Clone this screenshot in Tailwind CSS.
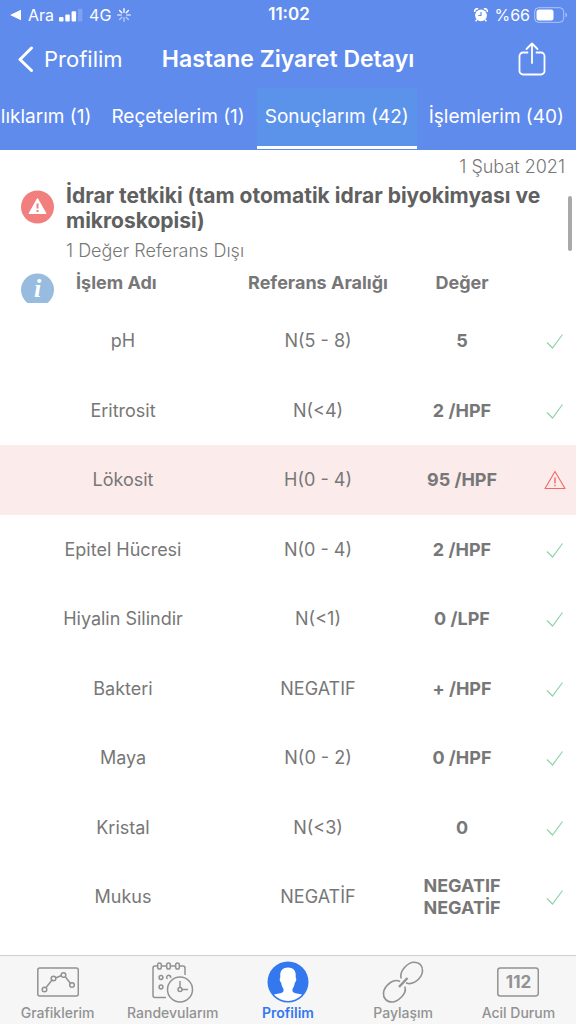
<!DOCTYPE html>
<html lang="tr">
<head>
  <meta charset="UTF-8" />
  <title>Hastane Ziyaret Detayı</title>
  <meta name="viewport" content="width=device-width, initial-scale=1.0" />
  <script src="https://cdn.jsdelivr.net/npm/@tailwindcss/browser@4"></script>
</head>
<body class="relative flex min-h-screen flex-col overflow-x-hidden bg-white font-['Inter','Liberation_Sans',sans-serif] text-[#777777]">

  <header class="bg-[#5f8bed] text-white">

    <!-- Durum çubuğu -->
    <div class="grid h-[30px] grid-cols-3 items-center pr-2 pl-[10px] text-base">
      <div class="flex items-center">
        <svg class="h-3 w-3" viewBox="0 0 12 12" fill="currentColor"><path d="M0 6 11 .8v10.400z" /></svg>
        <span class="ml-[6px]">Ara</span>
        <svg class="ml-[5px] h-[14px] w-6" viewBox="0 0 24 14" fill="currentColor">
          <rect x="0" y="9" width="4.500" height="4.500" rx="1" />
          <rect x="6.300" y="6.500" width="4.500" height="7" rx="1" />
          <rect x="12.600" y="3.300" width="4.500" height="10.200" rx="1" />
          <rect x="18.900" y=".8" width="4.500" height="12.700" rx="1" opacity=".2" />
        </svg>
        <span class="ml-[6px]">4G</span>
        <svg class="ml-[6px] h-[14px] w-[14px]" viewBox="0 0 14 14" stroke="currentColor" stroke-width="1.400" stroke-linecap="round">
          <path d="M7 .7v3.500M11.400 2.600 9.200 4.800M2.600 2.600l2.200 2.200" />
          <path d="M13.300 7H9.800M4.200 7H.7" opacity=".7" />
          <path d="M11.400 11.400 9.200 9.200M7 13.300V9.800M2.600 11.400l2.200-2.200" opacity=".55" />
        </svg>
      </div>
      <span class="text-center text-[17px] font-semibold">11:02</span>
      <div class="flex items-center justify-end">
        <svg class="h-[14px] w-[14px]" viewBox="0 0 14 14">
          <path d="M.6 4A3 3 0 0 1 4.200.7M13.400 4A3 3 0 0 0 9.800.7M2.800 11.800 1.600 13.200M11.200 11.800l1.200 1.400" fill="none" stroke="#fff" stroke-width="1.600" />
          <circle cx="7" cy="7.300" r="5.900" fill="#fff" />
          <path d="M7 4v3.500H4.300" fill="none" stroke="#5f8bed" stroke-width="1.200" />
        </svg>
        <span class="ml-[6px]">%66</span>
        <svg class="ml-1 h-4 w-[34px]" viewBox="0 0 34 16" fill="none">
          <rect x=".7" y=".7" width="29" height="14.600" rx="4" stroke="#fff" stroke-opacity=".5" />
          <rect x="2.500" y="2.500" width="17" height="11" rx="2.500" fill="#fff" />
          <path d="M31.500 5.500c2 1 2 4 0 5z" fill="#fff" fill-opacity=".5" />
        </svg>
      </div>
    </div>

    <div class="grid h-[58px] grid-cols-[1fr_auto_1fr] items-center px-[18px]">
      <button type="button" class="flex items-center gap-[10px] text-[22px]">
        <svg class="h-7 w-4" viewBox="0 0 16 28" fill="none" stroke="currentColor" stroke-width="3" stroke-linecap="round" stroke-linejoin="round"><path d="M13.500 3 2 14.500 13.500 25.500" /></svg>
        Profilim
      </button>
      <h1 class="text-[23px] font-semibold">Hastane Ziyaret Detayı</h1>
      <div class="flex justify-end pr-3">
        <button type="button" aria-label="Paylaş">
          <svg class="h-[34px] w-7" viewBox="0 0 28 34" fill="none" stroke="currentColor" stroke-width="1.800" stroke-linecap="round" stroke-linejoin="round">
            <path d="M9.500 10.500H5A3.500 3.500 0 0 0 1.500 14v15A3.500 3.500 0 0 0 5 32.500h18a3.500 3.500 0 0 0 3.500-3.500V14a3.500 3.500 0 0 0-3.500-3.500h-4.500" />
            <path d="M14 21V1.500M8.500 7 14 1.500 19.500 7" />
          </svg>
        </button>
      </div>
    </div>

    <nav class="flex h-[62px] justify-end gap-1 overflow-hidden pr-1 text-[19px] whitespace-nowrap">
      <a href="#" class="flex items-center px-2 pb-1">Hastalıklarım (1)</a>
      <a href="#" class="flex items-center px-2 pb-1">Reçetelerim (1)</a>
      <a href="#" class="mb-px flex items-center border-b-3 border-white bg-[#5c93ea] px-2">Sonuçlarım (42)</a>
      <a href="#" class="flex items-center px-2 pb-1">İşlemlerim (40)</a>
    </nav>
  </header>

  <main class="flex-1">
    <p class="px-[11px] pt-[5px] text-right text-lg leading-6 font-light">1 Şubat 2021</p>

    <section class="flex gap-3 pt-1 pr-5 pl-5">
      <svg class="mt-[7px] h-[34px] w-[34px] shrink-0" viewBox="0 0 34 34">
        <circle cx="17.500" cy="17" r="16.500" fill="#f07f7e" />
        <path d="M17.500 8.500 26 23.500H9z" fill="#fff" stroke="#fff" stroke-width="1" stroke-linejoin="round" />
        <path d="M17.500 13.500v5M17.500 20v2" stroke="#f07f7e" stroke-width="2" />
      </svg>
      <div>
        <h2 class="text-[21px] leading-[25px] font-bold text-[#606060]">İdrar tetkiki (tam otomatik idrar biyokimyası ve mikroskopisi)</h2>
        <p class="pt-[6px] text-lg leading-6 font-light">1 Değer Referans Dışı</p>
      </div>
    </section>

    <table class="w-full table-fixed text-center text-lg leading-[22px]">
      <thead>
        <tr class="h-[43px] align-top font-semibold">
          <th class="pt-[9px] pl-5">
            <div class="flex gap-[22px]">
              <svg class="h-[31px] w-[34px]" viewBox="0 0 34 31">
                <path d="M7.500 31A16.500 16.500 0 1 1 27.500 31z" fill="#97bce0" />
                <text x="17.500" y="25" text-anchor="middle" fill="#fff" font-family="Liberation Serif, serif" font-size="26" font-weight="700" font-style="italic">i</text>
              </svg>
              <span>İşlem Adı</span>
            </div>
          </th>
          <th class="w-36 pt-[9px] whitespace-nowrap">Referans Aralığı</th>
          <th class="w-36 pt-[9px]">Değer</th>
          <th class="w-[42px]"></th>
        </tr>
      </thead>
      <tbody id="sonuclar"></tbody>
    </table>
  </main>

  <!-- Kaydırma çubuğu -->
  <div class="absolute top-[196px] right-1 h-[55px] w-1 rounded-full bg-[#a9a9a9]"></div>

  <nav class="sticky bottom-0 grid h-[69px] grid-cols-5 border-t border-[#cfcfcf] bg-[#f6f6f6] text-sm leading-4 font-medium text-[#929292]">
    <a href="#" class="flex flex-col items-center gap-[2px] pt-[5px]">
      <svg class="h-[42px] w-[42px]" viewBox="0 0 42 42" fill="none" stroke="currentColor" stroke-width="1.500">
        <rect x=".8" y="7" width="40.500" height="28" rx="2" />
        <path d="m9 26.500 6.500-8M18.500 17l6-2.500M28.500 16l5 6.500" />
        <circle cx="7.500" cy="28.500" r="2.300" /><circle cx="16.500" cy="17.500" r="2.300" /><circle cx="26.500" cy="14" r="2.300" /><circle cx="35" cy="24" r="2.300" />
      </svg>
      Grafiklerim
    </a>
    <a href="#" class="flex flex-col items-center gap-[2px] pt-[5px]">
      <svg class="h-[42px] w-[42px]" viewBox="0 0 42 42" fill="none" stroke="currentColor" stroke-width="1.500">
        <path d="M14 36.500H3q-2 0-2-2V7q0-2 2-2h2.500M9.500 5h5M18.500 5h5M27.500 5h3.500q2 0 2 2v7" />
        <rect x="5.700" y="2" width="3.600" height="6" rx="1.800" /><rect x="14.700" y="2" width="3.600" height="6" rx="1.800" /><rect x="23.700" y="2" width="3.600" height="6" rx="1.800" />
        <circle cx="9" cy="16.500" r="1.900" /><path d="M15.500 18a2 2 0 1 1 3-1" /><circle cx="9" cy="26" r="1.900" />
        <circle cx="28" cy="28.500" r="12.500" />
        <circle cx="28" cy="28.500" r="2" />
        <path d="M28 26.500V20M30 28.500h6" />
      </svg>
      Randevularım
    </a>
    <a href="#" class="flex flex-col items-center gap-[2px] pt-[5px] font-semibold text-[#3478f0]">
      <svg class="h-[42px] w-[42px]" viewBox="0 0 42 42">
        <circle cx="21" cy="21" r="20.500" fill="currentColor" />
        <path d="M21 6.500c5.500 0 8.200 3.500 7.700 9l.1 1.500c1 .3.300 4-.9 4.500-.6 3.500-1.400 5-2.400 6.500-.3 3.500.5 4 9.700 5.500A19 19 0 0 1 6.800 33.500c9.200-1.500 10-2 9.700-5.500-1-1.500-1.800-3-2.400-6.500-1.200-.5-1.900-4.200-.9-4.500l.1-1.500c-.5-5.500 2.200-9 7.700-9z" fill="#fff" />
      </svg>
      Profilim
    </a>
    <a href="#" class="flex flex-col items-center gap-[2px] pt-[5px]">
      <svg class="h-[42px] w-[42px]" viewBox="0 0 42 42" fill="none" stroke="currentColor" stroke-width="1.600">
        <path d="M19.200 17.500C17.500 13 20 9.500 22.500 6.500 25.500 3 28 1.200 32 1.200c5.500 0 9 4 8.500 9-.3 4-3.500 8-7 10.500-3 2-6.500 2.500-9.500 1" />
        <path d="M22.800 25.500c1.700 4.500-.8 7.500-3.300 10.500-3 3-5.500 5-9.500 5-5.500 0-9-4-8.500-9 .3-4 3.500-8 7-10.500 3-2 6.500-2.500 9.500-1" />
        <path d="m17 26 8.500-9" stroke-width="2.400" />
      </svg>
      Paylaşım
    </a>
    <a href="#" class="flex flex-col items-center gap-[2px] pt-[5px]">
      <svg class="h-[42px] w-[42px]" viewBox="0 0 42 42">
        <rect x=".8" y="7" width="40.500" height="28" rx="2.500" fill="none" stroke="currentColor" stroke-width="1.500" />
        <text x="21.500" y="27" text-anchor="middle" fill="currentColor" font-size="17" font-weight="700">112</text>
      </svg>
      Acil Durum
    </a>
  </nav>

  <script>
    const sonuclar = [
      { ad: 'pH', referans: 'N(5 - 8)', deger: '5' },
      { ad: 'Eritrosit', referans: 'N(<4)', deger: '2 /HPF' },
      { ad: 'Lökosit', referans: 'H(0 - 4)', deger: '95 /HPF', uyari: true },
      { ad: 'Epitel Hücresi', referans: 'N(0 - 4)', deger: '2 /HPF' },
      { ad: 'Hiyalin Silindir', referans: 'N(<1)', deger: '0 /LPF' },
      { ad: 'Bakteri', referans: 'NEGATIF', deger: '+ /HPF' },
      { ad: 'Maya', referans: 'N(0 - 2)', deger: '0 /HPF' },
      { ad: 'Kristal', referans: 'N(<3)', deger: '0' },
      { ad: 'Mukus', referans: 'NEGATİF', deger: 'NEGATIF NEGATİF' }
    ];

    const normalIkon = `
      <svg class="mx-auto h-5 w-5" viewBox="0 0 20 20" fill="none" stroke="#8fd3a6" stroke-width="1.200"><path d="m2 11.500 5.500 5.500L17.500 3.500" /></svg>`;
    const uyariIkon = `
      <svg class="mx-auto h-5 w-[22px]" viewBox="0 0 22 20" fill="none" stroke="#f26666" stroke-width="1.100">
        <path d="M11 1.500 21 18.500H1z" stroke-linejoin="round" /><path d="M11 7.500v6M11 14.800v1.400" stroke-width="1.400" />
      </svg>`;

    const govde = document.getElementById('sonuclar');

    sonuclar.forEach(s => {
      const tr = document.createElement('tr');
      tr.className = s.uyari ? 'h-[70px] bg-[#fbebea]' : 'odd:h-[70px] even:h-[69px]';
      tr.innerHTML = `
        <td>${s.ad.replace('<', '&lt;')}</td>
        <td>${s.referans.replace('<', '&lt;')}</td>
        <td class="px-6 font-bold">${s.deger}</td>
        <td>${s.uyari ? uyariIkon : normalIkon}</td>
      `;
      govde.appendChild(tr);
    });
  </script>

</body>
</html>
